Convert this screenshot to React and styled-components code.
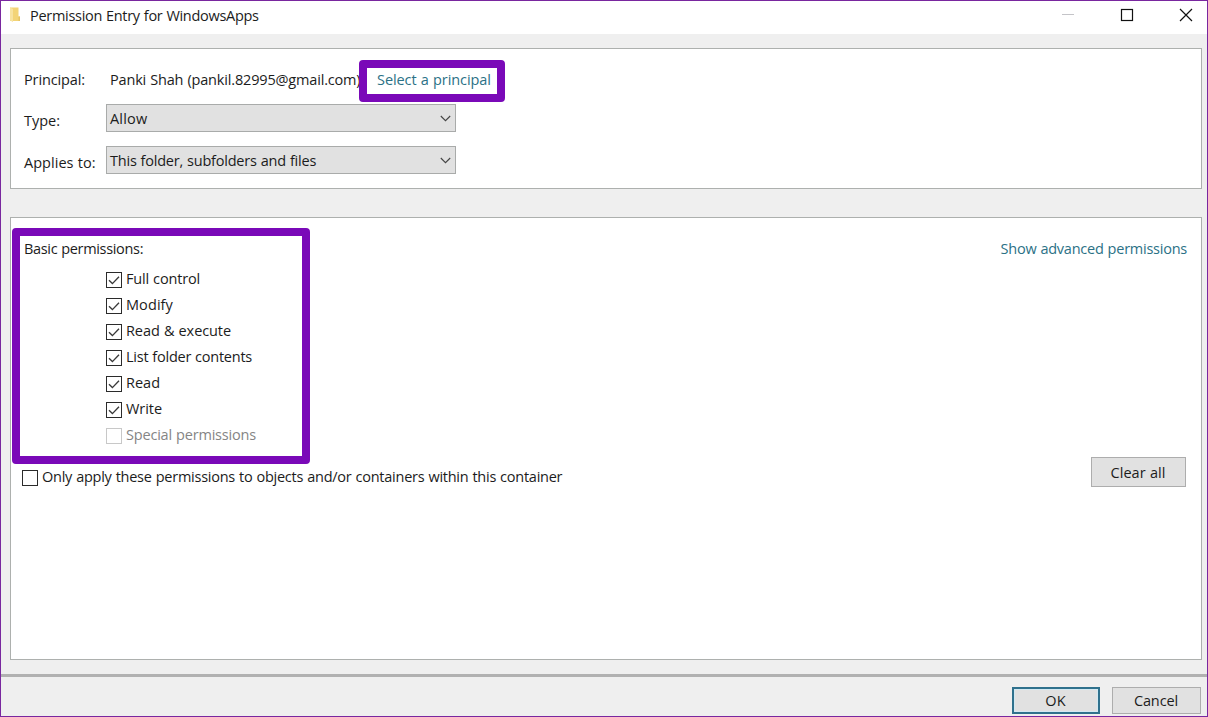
import React from 'react';
import styled, { createGlobalStyle } from 'styled-components';

const GlobalStyle = createGlobalStyle`
  *, *::before, *::after { box-sizing: border-box; }
  body {
    margin: 0;
    background: #efefef;
    font: 14.5px/20px "Open Sans", "Noto Sans", sans-serif;
    color: #1c1c1c;
  }
`;

const Window = styled.div`
  display: flex;
  flex-direction: column;
  width: 1208px;
  height: 717px;
  border: 1px solid #79279f;
  background: #efefef;
  overflow: hidden;
`;

const Text = styled.span`
  display: block;
  padding-top: 1px;
  margin-bottom: -1px;
  white-space: nowrap;
  letter-spacing: ${p => p.$tracking || 0}px;
  word-spacing: 0.5px;
`;

const TitleBar = styled.header`
  display: flex;
  align-items: flex-start;
  height: 33px;
  flex: none;
  padding: 4px 14px 0 8px;
  background: #fff;
`;

const FolderIcon = styled.svg`
  width: 12px;
  height: 16px;
  margin: 1px 9px 0 0;
`;

const WindowControls = styled.div`
  display: flex;
  gap: 45px;
  margin: 3px 0 0 auto;
`;

const ControlIcon = styled.svg`
  width: 14px;
  height: 14px;
  fill: none;
  stroke: ${p => p.$color || '#111'};
  stroke-width: ${p => p.$weight || 1};
`;

const Panel = styled.section`
  position: relative;
  flex: none;
  width: 1192px;
  height: ${p => p.$height}px;
  margin: ${p => p.$top}px 0 0 9px;
  border: 1px solid #adb0ae;
  background: #fff;
`;

const PrincipalPanel = styled(Panel)`
  padding: 20px 0 0 13px;
`;

const PermissionsPanel = styled(Panel)`
  padding: 20px 13px 0 11px;
`;

const Field = styled.div`
  display: flex;
  align-items: flex-start;
  height: ${p => p.$height}px;
`;

const FieldLabel = styled.label`
  width: 82px;
  flex: none;
  padding-top: ${p => p.$top || 0}px;
`;

const PrincipalName = styled.div`
  width: 252px;
  margin-left: 4px;
`;

const Link = styled.a`
  color: #2b7186;
  text-decoration: none;
`;

const PrincipalLink = styled(Link)`
  margin-left: 15px;
`;

const Select = styled.button`
  display: flex;
  align-items: center;
  justify-content: space-between;
  width: 350px;
  height: 28px;
  padding: 0 4px 0 3px;
  border: 1px solid #a9abaa;
  border-radius: 0;
  background: #e1e1e1;
  color: inherit;
  font: inherit;
`;

const Chevron = styled.svg`
  width: 11px;
  height: 7px;
  fill: none;
  stroke: #444;
  stroke-width: 1.1;
`;

const Highlight = styled.div`
  position: absolute;
  left: ${p => p.$x}px;
  top: ${p => p.$y}px;
  width: ${p => p.$width}px;
  height: ${p => p.$height}px;
  border: 8px solid #7a09b8;
  border-radius: 4px;
  pointer-events: none;
`;

const PanelHeading = styled.div`
  display: flex;
  justify-content: space-between;
  height: 20px;
  padding: 0 1px 0 2px;
`;

const PermissionList = styled.div`
  display: flex;
  flex-direction: column;
  gap: 6px;
  padding: 10px 0 0 84px;
`;

const CheckRow = styled.label`
  display: flex;
  align-items: flex-start;
  gap: 4px;
  height: 20px;
  color: ${p => (p.$disabled ? '#858585' : 'inherit')};
`;

const Box = styled.span`
  display: flex;
  width: 16px;
  height: 16px;
  flex: none;
  margin-top: 4px;
  border: 1px solid ${p => (p.$disabled ? '#c8c8c8' : '#2b2b2b')};
  background: #fff;
`;

const Tick = styled.svg`
  width: 14px;
  height: 14px;
  fill: none;
  stroke: #3a3a3a;
  stroke-width: 1.35;
`;

const BottomRow = styled.div`
  display: flex;
  justify-content: space-between;
  align-items: flex-start;
  padding: 13px 2px 0 0;
`;

const ScopeRow = styled.div`
  padding-top: 9px;
`;

const Button = styled.button`
  display: flex;
  align-items: center;
  justify-content: center;
  width: ${p => p.$width}px;
  height: ${p => p.$height}px;
  padding: 0 1px ${p => p.$lift || 0}px 0;
  border: ${p => (p.$primary ? '2px solid #2f718d' : '1px solid #adadad')};
  border-radius: 0;
  background: #e1e1e1;
  box-shadow: ${p => (p.$primary ? 'inset 0 0 0 1px #d3e9f2' : 'none')};
  color: inherit;
  font: inherit;
`;

const Footer = styled.footer`
  display: flex;
  justify-content: flex-end;
  gap: 12px;
  flex: 1;
  margin-top: 14px;
  padding: 10px 6px 0 0;
  border-top: 3px solid #b1b1b1;
`;

const permissions = [
  { name: 'Full control', tracking: -0.17, checked: true },
  { name: 'Modify', tracking: 0.08, checked: true },
  { name: 'Read & execute', tracking: -0.08, checked: true },
  { name: 'List folder contents', tracking: -0.245, checked: true },
  { name: 'Read', tracking: 0, checked: true },
  { name: 'Write', tracking: -0.05, checked: true },
  { name: 'Special permissions', tracking: -0.19, disabled: true },
];

function Checkbox({ name, tracking, checked, disabled }) {
  return (
    <CheckRow $disabled={disabled}>
      <Box $disabled={disabled}>
        {checked && (
          <Tick viewBox="0 0 14 14">
            <path d="M2 7.2 5.4 10.6 12 3.7" />
          </Tick>
        )}
      </Box>
      <Text $tracking={tracking}>{name}</Text>
    </CheckRow>
  );
}

function Dropdown({ value, tracking }) {
  return (
    <Select type="button">
      <Text $tracking={tracking}>{value}</Text>
      <Chevron viewBox="0 0 11 7">
        <path d="M.8 1 5.5 5.7 10.2 1" />
      </Chevron>
    </Select>
  );
}

export default function App() {
  return (
    <Window>
      <GlobalStyle />
      <TitleBar>
        <FolderIcon viewBox="0 0 12 16">
          <path d="M1 1.5h8.5v9H11V15H1z" fill="#f3d477" />
          <path d="M1 1.5 4 3v13l-3-1.5z" fill="#f8e3a0" />
          <path d="M9.5 10.5H11V15H9.5z" fill="#e6c466" />
        </FolderIcon>
        <Text $tracking={-0.295}>Permission Entry for WindowsApps</Text>
        <WindowControls>
          <ControlIcon viewBox="0 0 14 14" $color="#c4c4c8">
            <path d="M1 6.5h12" />
          </ControlIcon>
          <ControlIcon viewBox="0 0 14 14" $weight={1.2}>
            <rect x="1.5" y="1.5" width="11" height="11" />
          </ControlIcon>
          <ControlIcon viewBox="0 0 14 14" $weight={1.2}>
            <path d="m1 1 12 12M13 1 1 13" />
          </ControlIcon>
        </WindowControls>
      </TitleBar>

      <PrincipalPanel $height={141} $top={14}>
        <Field $height={35}>
          <FieldLabel><Text $tracking={-0.12}>Principal:</Text></FieldLabel>
          <PrincipalName>
            <Text $tracking={-0.17}>Panki Shah (pankil.82995@gmail.com)</Text>
          </PrincipalName>
          <PrincipalLink><Text $tracking={-0.07}>Select a principal</Text></PrincipalLink>
        </Field>
        <Field $height={42}>
          <FieldLabel $top={6}><Text>Type:</Text></FieldLabel>
          <Dropdown value="Allow" tracking={0.2} />
        </Field>
        <Field $height={42}>
          <FieldLabel $top={6}><Text $tracking={0.04}>Applies to:</Text></FieldLabel>
          <Dropdown value="This folder, subfolders and files" tracking={-0.22} />
        </Field>
        <Highlight $x={348} $y={11} $width={146} $height={42} />
      </PrincipalPanel>

      <PermissionsPanel $height={443} $top={28}>
        <PanelHeading>
          <Text $tracking={-0.33}>Basic permissions:</Text>
          <Link><Text $tracking={-0.24}>Show advanced permissions</Text></Link>
        </PanelHeading>
        <PermissionList>
          {permissions.map(item => <Checkbox key={item.name} {...item} />)}
        </PermissionList>
        <BottomRow>
          <ScopeRow>
            <Checkbox
              name="Only apply these permissions to objects and/or containers within this container"
              tracking={-0.246}
            />
          </ScopeRow>
          <Button type="button" $width={95} $height={30}><Text $tracking={0.05}>Clear all</Text></Button>
        </BottomRow>
        <Highlight $x={1} $y={10} $width={298} $height={236} />
      </PermissionsPanel>

      <Footer>
        <Button type="button" $width={88} $height={27} $lift={1} $primary><Text $tracking={0.2}>OK</Text></Button>
        <Button type="button" $width={89} $height={27} $lift={1}><Text $tracking={-0.1}>Cancel</Text></Button>
      </Footer>
    </Window>
  );
}
